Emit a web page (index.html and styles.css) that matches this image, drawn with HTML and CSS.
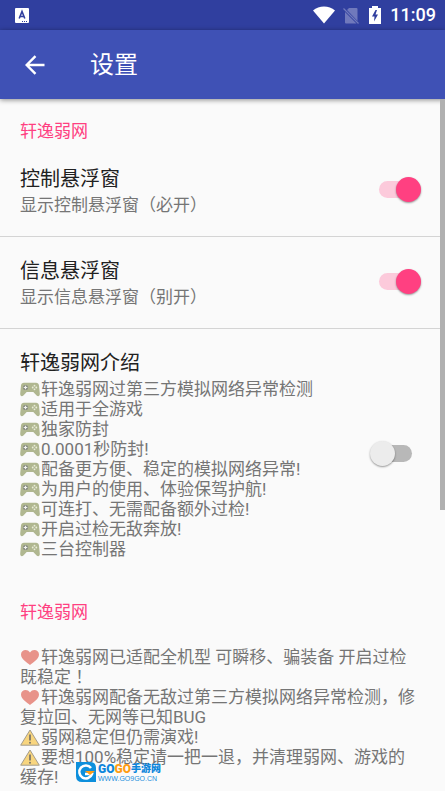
FILE: index.html
```html
<!DOCTYPE html>
<html lang="zh-CN">
<head>
<meta charset="utf-8">
<meta name="viewport" content="width=device-width, initial-scale=1">
<title>设置</title>
<link rel="stylesheet" href="styles.css">
</head>
<body>
<svg class="defs" aria-hidden="true">
  <symbol id="pad" viewBox="0 0 20 14">
    <path d="M4 0.3h12c1.800 0 2.700 1 3 2.800l.8 8c.2 2.800-2 3.200-3.200 1.800L13.300 9.500H6.700L3.400 12.900C2.200 14.300 0 13.900.2 11.100L1 3.100C1.300 1.300 2.200.3 4 .3z" fill="#b0b790"/>
    <circle cx="5.500" cy="5" r="2.600" fill="#888c83"/>
    <path d="M5.500 3.200v3.600M3.700 5h3.600" stroke="#f1f1ec" stroke-width="1.200"/>
    <g fill="#e9ecd9"><circle cx="14.500" cy="3.200" r=".9"/><circle cx="14.500" cy="6.800" r=".9"/><circle cx="12.700" cy="5" r=".9"/><circle cx="16.300" cy="5" r=".9"/></g>
  </symbol>
  <symbol id="heart" viewBox="0 0 20 16">
    <path d="M10 15.500C7 13 1 9.500 1 5c0-5 6.500-6 9-2 2.500-4 9-3 9 2 0 4.500-6 8-9 10.500z" fill="#e8938a"/>
  </symbol>
  <symbol id="warn" viewBox="0 0 20 17">
    <path d="M10 1 19.300 16.200H.7z" fill="#f8d57e" stroke="#a39c8d" stroke-width="1" stroke-linejoin="round"/>
    <path d="M10 5.500v6" stroke="#77736a" stroke-width="1.700"/><circle cx="10" cy="13.800" r="1" fill="#77736a"/>
  </symbol>
</svg>
<div class="status">
  <svg class="app" viewBox="0 0 14 15"><rect width="14" height="15" rx="1" fill="#fff"/><path d="M4.200 10.500 7 3.500l2.800 7M5.200 8.500h3.600" fill="none" stroke="#303f9f" stroke-width="1.600"/><path d="M7 13.500h6" stroke="#303f9f" stroke-dasharray="1 1"/></svg>
  <svg class="wifi" viewBox="0 0 22 18"><path d="M0 4.500C6-1 16-1 22 4.500L11 17.500z" fill="#fff"/></svg>
  <svg class="sim" viewBox="0 0 16 17"><path d="M6 1h7.500q1 0 1 1v12L4 3zM2 5v10.500q0 1 1 1h10.500z" fill="#7079bc"/><path d="M.5 1.500 15.500 16.500" stroke="#7079bc" stroke-width="1.200"/></svg>
  <svg class="battery" viewBox="0 0 12 18"><path d="M3 0h6v2h3v16H0V2h3z" fill="#fff"/><path d="M6.500 4 3 10.500h2.500L5 15.500l4-7H6.500L8 4z" fill="#303f9f"/></svg>
  <time>11:09</time>
</div>
<header class="toolbar">
  <button type="button" class="back" aria-label="返回"><svg viewBox="0 0 20 20"><path d="M19.500 10H2M10.500 1.200 1.700 10l8.800 8.800" fill="none" stroke="#fff" stroke-width="2.400"/></svg></button>
  <h1>设置</h1>
</header>
<main>
  <h2>轩逸弱网</h2>
  <section class="row first">
    <label for="control"><span class="name">控制悬浮窗</span><span class="summary">显示控制悬浮窗（必开）</span></label>
    <input class="switch" id="control" type="checkbox" checked>
  </section>
  <section class="row">
    <label for="info"><span class="name">信息悬浮窗</span><span class="summary">显示信息悬浮窗（别开）</span></label>
    <input class="switch" id="info" type="checkbox" checked>
  </section>
  <section class="row">
    <label for="intro"><span class="name">轩逸弱网介绍</span><span class="summary"><svg class="emoji"><use href="#pad"/></svg>轩逸弱网过第三方模拟网络异常检测<br><svg class="emoji"><use href="#pad"/></svg>适用于全游戏<br><svg class="emoji"><use href="#pad"/></svg>独家防封<br><svg class="emoji"><use href="#pad"/></svg>0.0001秒防封!<br><svg class="emoji"><use href="#pad"/></svg>配备更方便、稳定的模拟网络异常!<br><svg class="emoji"><use href="#pad"/></svg>为用户的使用、体验保驾护航!<br><svg class="emoji"><use href="#pad"/></svg>可连打、无需配备额外过检!<br><svg class="emoji"><use href="#pad"/></svg>开启过检无敌奔放!<br><svg class="emoji"><use href="#pad"/></svg>三台控制器</span></label>
    <input class="switch" id="intro" type="checkbox">
  </section>
  <h2 class="second">轩逸弱网</h2>
  <p class="summary notes"><svg class="emoji"><use href="#heart"/></svg>轩逸弱网已适配全机型 可瞬移、骗装备 开启过检既稳定 ！<br><svg class="emoji"><use href="#heart"/></svg>轩逸弱网配备无敌过第三方模拟网络异常检测，修复拉回、无网等已知BUG<br><svg class="emoji"><use href="#warn"/></svg>弱网稳定但仍需演戏!<br><svg class="emoji"><use href="#warn"/></svg>要想100%稳定请一把一退，并清理弱网、游戏的缓存!</p>
</main>
<div class="scrollbar"></div>
<div class="mark">
  <svg viewBox="0 0 20 20"><path d="M0 0h14q6 0 6 6v14H6q-6 0-6-6z" fill="#0d8fdc"/><path d="M15 6a6.500 6.500 0 1 0 1 6H9" fill="none" stroke="#fff" stroke-width="2.500"/><path d="M9 9h10l-5 4z" fill="#ff9d14"/></svg>
  <div><div class="brand">GO<b>GO</b><span>手游网</span></div><div class="site">WWW.GO9GO.CN</div></div>
</div>
</body>
</html>
```

FILE: styles.css
```css
* { box-sizing: border-box; }
body {
  margin: 0;
  position: relative;
  min-height: 100vh;
  overflow: hidden;
  background: #fafafa;
  color: #212121;
  font-family: Roboto, "Noto Sans CJK SC", sans-serif;
}
.defs { position: absolute; width: 0; height: 0; }
.status {
  height: 30px;
  padding: 0 9px 0 15px;
  display: flex;
  align-items: center;
  background: #303f9f;
  color: #fff;
}
.app { width: 14px; height: 15px; margin-right: auto; }
.wifi { width: 22px; height: 18px; margin-right: 8px; }
.sim { width: 16px; height: 17px; margin-right: 10px; }
.battery { width: 12px; height: 18px; margin-right: 9px; }
time { font-size: 18px; font-weight: 500; line-height: 30px; }
.toolbar {
  height: 69px;
  padding-left: 15px;
  display: flex;
  align-items: center;
  gap: 35px;
  background: #3f51b5;
  color: #fff;
  box-shadow: 0 1px 5px rgba(0, 0, 0, .45);
}
.back { width: 40px; height: 40px; padding: 10px; border: 0; background: none; }
.back svg { display: block; width: 20px; height: 20px; }
h1 { margin: 0; font-size: 24px; line-height: 32px; font-weight: 400; }
h2 {
  margin: 0;
  padding: 22px 20px 0;
  color: #ff4081;
  font-size: 17px;
  line-height: 20px;
  font-weight: 400;
}
.row {
  display: flex;
  align-items: center;
  padding: 21px 24px 18px 20px;
  border-bottom: 1px solid #d4d4d4;
}
.row.first { padding-top: 25px; }
.row:last-of-type { border: 0; }
label { flex: 1; }
.name, label .summary { display: block; }
.name { font-size: 20px; line-height: 26px; }
.summary { color: #757575; font-size: 17px; line-height: 20px; }
label .summary { padding: 3px 0; }
.emoji { width: 20px; height: 17px; margin-right: 1px; vertical-align: -3px; }
.switch {
  appearance: none;
  position: relative;
  width: 51px;
  height: 26px;
  margin: 0 0 4px;
}
.switch::before {
  content: "";
  position: absolute;
  left: 5px;
  top: 4px;
  width: 37px;
  height: 17px;
  border-radius: 9px;
  background: #b8b8b8;
}
.switch::after {
  content: "";
  position: absolute;
  left: 0;
  top: 0;
  width: 25px;
  height: 25px;
  border-radius: 50%;
  background: #ececec;
  box-shadow: 0 1px 2px rgba(0, 0, 0, .4);
}
.switch:checked::before { left: 9px; background: #fccadb; }
.switch:checked::after { left: 26px; background: #ff4081; }
.second { padding-top: 22px; }
.notes { margin: 0; padding: 25px 24px 0 20px; }
.scrollbar { position: absolute; right: 0; top: 99px; width: 5px; height: 52vh; background: #b0b0b0; }
.mark { position: absolute; left: 76px; bottom: 9px; display: flex; gap: 2px; }
.mark svg { width: 20px; height: 20px; }
.brand { display: flex; color: #0d86dc; font: 900 12px/14px Roboto, "Noto Sans CJK SC", sans-serif; white-space: nowrap; }
.brand b { color: #ff9d14; font-weight: 900; }
.brand span { font-size: 10px; }
.site { color: #1d8fdc; font: 7px/6px "Liberation Sans", sans-serif; }
```
